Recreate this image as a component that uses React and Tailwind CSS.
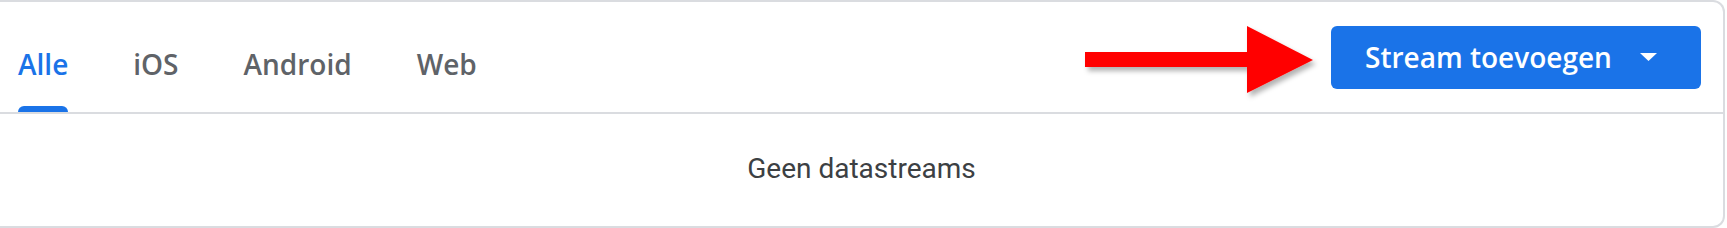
import React from 'react';

const tabs = ['Alle', 'iOS', 'Android', 'Web'];

function RedArrow() {
    return (
        <svg width="245" height="85" viewBox="0 0 245 85" className="shrink-0 mt-[10px]">
            <defs>
                <filter id="arrowShadow" x="-10%" y="-20%" width="130%" height="150%">
                    <feDropShadow dx="3" dy="4" stdDeviation="2.5" floodColor="#000" floodOpacity="0.3" />
                </filter>
            </defs>
            <g filter="url(#arrowShadow)">
                <rect x="5" y="32" width="164" height="15" fill="#ff0000" />
                <polygon points="167,6 233,40 167,73" fill="#ff0000" />
            </g>
        </svg>
    );
}

export default function App() {
    return (
        <div className="w-full h-[228px] bg-white" style={{ fontFamily: 'Roboto, "Liberation Sans", sans-serif' }}>
            <div className="w-[1725px] h-[228px] border-t-2 border-r-2 border-b-2 border-[#dadce0] rounded-r-[12px] flex flex-col">
                <div className="h-[112px] flex items-center justify-between border-b-2 border-[#dadce0] pr-[22px]">
                    <nav className="self-stretch flex items-end gap-[65px] pl-[18px] font-['Open_Sans',sans-serif] font-semibold text-[28px]">
                        {tabs.map((t, i) => (
                            <div key={t} className="flex flex-col items-stretch">
                                <span className={`leading-[36px] ${i === 0 ? 'text-[#1a73e8]' : 'text-[#5f6368]'}`}>{t}</span>
                                <div className={`mt-[24px] h-[6px] rounded-t-[6px] ${i === 0 ? 'bg-[#1a73e8]' : 'bg-transparent'}`} />
                            </div>
                        ))}
                    </nav>
                    <div className="flex items-center gap-[6px]">
                        <RedArrow />
                        <button className="w-[370px] h-[63px] rounded-[6px] bg-[#1a73e8] text-white flex items-center pl-[34px] font-['Open_Sans',sans-serif] font-semibold text-[28px]">
                            <span>Stream toevoegen</span>
                            <svg width="17" height="8" viewBox="0 0 17 8" className="ml-[28px]">
                                <polygon points="0,0 17,0 8.5,8" fill="#ffffff" />
                            </svg>
                        </button>
                    </div>
                </div>
                <div className="flex-1 flex items-center justify-center pb-[3px]">
                    <span className="text-[28px] text-[#3c4043]">Geen datastreams</span>
                </div>
            </div>
        </div>
    );
}
